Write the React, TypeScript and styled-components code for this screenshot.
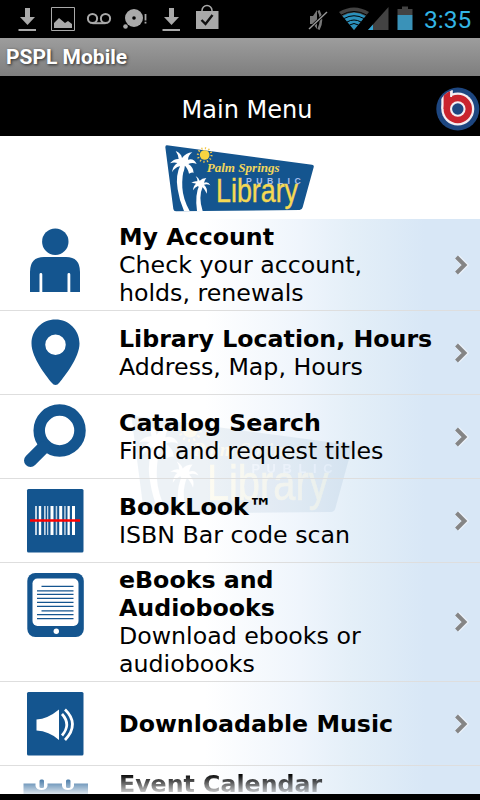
import type { ReactNode } from 'react'
import styled, { createGlobalStyle } from 'styled-components'

const BLUE = '#14558f'

const GlobalStyle = createGlobalStyle`
  * {
    box-sizing: border-box;
  }

  body {
    background-color: #000;
    margin: 0;
  }

  svg {
    display: block;
  }
`

const Screen = styled.div`
  background-color: #000;
  color: #000;
  display: flex;
  flex-direction: column;
  font-family: 'DejaVu Sans', sans-serif;
  height: 800px;
  overflow: hidden;
  width: 480px;
`

const StatusBar = styled.div`
  display: flex;
  height: 38px;
  justify-content: space-between;
`

const StatusIcons = styled.div`
  display: flex;
`

const Clock = styled.div`
  color: #33b5e5;
  font-family: Roboto, sans-serif;
  font-size: 24.5px;
  line-height: 38px;
  padding-top: 1px;
  width: 56px;
  white-space: nowrap;
`

const TitleBar = styled.div`
  background: linear-gradient(#9d9d9d, #7e7e7e);
  color: #fff;
  font-family: Roboto, sans-serif;
  font-size: 21px;
  font-weight: 700;
  height: 38px;
  line-height: 39px;
  padding-left: 6px;
  text-shadow: 1px 1px 3px rgb(0 0 0 / 70%);
`

const Header = styled.div`
  align-items: center;
  color: #fff;
  display: grid;
  font-size: 24px;
  grid-template-columns: 44px 1fr 44px;
  height: 60px;
  padding-top: 6px;
  text-align: center;
`

const HeaderTitle = styled.div`
  line-height: 28px;
  padding-left: 14px;
  padding-top: 2px;
`

const Banner = styled.div`
  background-color: #fff;
  display: flex;
  height: 83px;
  padding-left: 150px;
`

const List = styled.div`
  background: linear-gradient(
    90deg,
    #fff 0,
    #fff 205px,
    #eff5fc 300px,
    #e4eff8 350px,
    #d8e7f6 425px
  );
  height: 575px;
  isolation: isolate;
  overflow: hidden;
  position: relative;
`

const Watermark = styled.div`
  left: 109px;
  opacity: 0.07;
  position: absolute;
  top: 183px;
  z-index: -1;
`

const Row = styled.div<{ height: number }>`
  align-items: center;
  border-bottom: 1px solid #dedede;
  display: grid;
  grid-template-columns: 119px 1fr 40px;
  height: ${({ height }) => height}px;
`

const IconCell = styled.div`
  align-self: start;
`

const RowText = styled.div`
  font-size: 23.7px;
  line-height: 28px;
`

const RowTitle = styled.div`
  font-weight: 700;
`

const RowBody = styled(RowText)<{ $narrow?: boolean }>`
  margin-right: -20px;
  padding-right: ${({ $narrow }) => ($narrow ? '70px' : 0)};
`

const Chevron = styled.div`
  padding-left: 12px;
`

const FadingRow = styled.div`
  display: grid;
  grid-template-columns: 119px 1fr;
  height: 28px;
  mask-image: linear-gradient(#000 8px, rgb(0 0 0 / 15%) 28px);
  overflow: hidden;

  ${RowText} {
    padding-top: 4px;
  }
`

const NotificationIcons = () => (
  <svg width="230" height="38" viewBox="0 0 230 38" fill="#a9a9a9">
    <path d="M25 8h5v9h5l-7.500 8-7.500-8h5zM18.500 29H36v2H18.500z" />
    <path d="M51.500 7.500h23v23h-23z" fill="none" stroke="#a9a9a9" />
    <path d="M54 28v-5l5-5 6 5 3-2 4 3v4z" />
    <g fill="none" stroke="#a9a9a9" strokeWidth="2">
      <circle cx="92.500" cy="18.500" r="4.600" />
      <circle cx="105.500" cy="18.500" r="4.600" />
      <path d="M92.500 23.200h13" />
    </g>
    <circle cx="134" cy="18" r="9" />
    <circle cx="134" cy="18" r="1.800" fill="#000" />
    <circle cx="125.500" cy="26.500" r="2.300" />
    <path d="M144.600 14h1.800v6.500h-1.800zM144.600 21.800h1.800v1.800h-1.800z" />
    <path d="M169 8h5v9h5l-7.500 8-7.500-8h5zM162.500 29H180v2h-17.500z" />
    <path d="M202 12v-1.500a5 5 0 0 1 10 0V12" fill="none" stroke="#a9a9a9" strokeWidth="1.500" />
    <path d="M196 11h22.500v18H196z" />
    <path d="M201.500 20l4 4 7-9" fill="none" stroke="#111" strokeWidth="2.400" />
  </svg>
)

const SystemIcons = () => (
  <svg width="119" height="38" viewBox="305 0 119 38">
    <path d="M310 16h3l4-6v19l-4-5h-3z" fill="#777" />
    <path d="M318.500 10.500q5 9 0 19" fill="none" stroke="#777" strokeWidth="2.500" />
    <path d="M309 29l18-17" stroke="#000" strokeWidth="3" />
    <path d="M309 29l18-17" stroke="#999" strokeWidth="1.400" />
    <path d="M354 30L339 12q15-9 30 0z" fill="#434343" />
    <path d="M354 30L342.500 16q11.500-7 23 0z" fill="#2b91bd" />
    <g fill="none" stroke="#000" strokeWidth="1">
      <path d="M341.300 15q12.700-7 25.400 0" />
      <path d="M344 18.500q10-5.500 20 0" />
      <path d="M347 22q7-4 14 0" />
      <path d="M349.500 25q4.500-3 9 0" />
    </g>
    <path d="M388.500 7v23H368z" fill="#434343" />
    <path d="M373 24.500V30h-5z" fill="#33a6d6" />
    <path d="M402 6.500h6V9h4.500v6H397.500V9h4.500z" fill="#434343" />
    <path d="M397.500 15h15v15h-15z" fill="#3a92b8" />
  </svg>
)

const BadgeIcon = () => (
  <svg width="44" height="44" viewBox="0 0 44 44">
    <clipPath id="badge">
      <circle cx="21.800" cy="22" r="19.500" />
    </clipPath>
    <circle cx="21.800" cy="22" r="21.500" fill="#1d4680" />
    <g clipPath="url(#badge)">
      <circle cx="21.800" cy="22" r="16.500" fill="#f4eef2" />
      <path d="M5.300 22V5l4-4h7.500v12z" fill="#f4eef2" />
      <circle cx="21.800" cy="22" r="14.200" fill="#c9242e" />
      <path d="M7.600 22V4.500L14.300 0v22z" fill="#c9242e" />
      <circle cx="21.800" cy="22" r="7.800" fill="#f4eef2" />
      <path d="M15.200 1v9" stroke="#f4eef2" strokeWidth="1.800" />
      <circle cx="21.800" cy="22" r="5.700" fill="#1d4680" />
    </g>
  </svg>
)

const Logo = ({ width, height }: { width: number; height: number }) => (
  <svg width={width} height={height} viewBox="0 0 540 252">
    <path
      d="M51 28L486 86q7 1 5 8L458 214q-2 8-9 8L78 226q-7 0-8-7L46 34q0-7 5-6z"
      fill={BLUE}
    />
    <circle
      cx="164"
      cy="57"
      r="20.500"
      fill="none"
      stroke="#f3c84b"
      strokeWidth="6"
      strokeDasharray="3.800 6.930"
    />
    <circle cx="164" cy="57" r="14.500" fill="#f8d440" />
    <g fill="#fff">
      <path d="M93 84q-18 34-10 76 5 34 19 65h17q-20-36-22-70-2-36 8-68z" />
      <path d="M96 66Q94 52 77 45q8 11 9 24-14-1-26 13 11-4 22-1-14 9-16 28 8-14 23-18 8 7 11 17 5-8 3-20 10 8 14 25 13-6 14-1 0-18-16-28 12-6 25 0-8-18-26-13 1-14 13-22-20 2-31 17z" />
      <path d="M148 148q-14 28-7 77h17q-14-42 1-75z" />
      <path d="M149 134q-2-8-12-14 6 8 5 16-10-2-18 5 8-1 14 2-8 6-9 20 5-9 15-13 5 5 6 12 4-6 3-13 10 7 17 24 4-16-8-27 10-3 19 2-6-12-19-8 2-8 7-14-13 0-20 8z" />
    </g>
    <text
      x="170"
      y="109"
      fill="#f1d65b"
      fontFamily="'Liberation Serif', serif"
      fontSize="39"
      fontStyle="italic"
      fontWeight="700"
      textLength="219"
      lengthAdjust="spacingAndGlyphs"
    >
      Palm Springs
    </text>
    <text
      x="288"
      y="143"
      fill="#a9c0ee"
      fontFamily="'Liberation Sans', sans-serif"
      fontSize="26"
      fontWeight="700"
      textLength="164"
    >
      PUBLIC
    </text>
    <text
      x="198"
      y="198"
      fill="#f5d954"
      stroke="#f5d954"
      strokeWidth="1.200"
      fontFamily="'Liberation Sans', sans-serif"
      fontSize="101"
      textLength="246"
      lengthAdjust="spacingAndGlyphs"
    >
      Library
    </text>
  </svg>
)

const MenuIcon = ({ children }: { children: ReactNode }) => (
  <svg width="119" height="80" viewBox="0 0 119 80" fill={BLUE}>
    {children}
  </svg>
)

const PersonIcon = () => (
  <MenuIcon>
    <circle cx="55.300" cy="22.700" r="13.200" />
    <path d="M30 73V53q0-15 14-15h22q14 0 14 15v20H70.300V55.500a1.400 1.400 0 0 0-2.800 0V73H42.300V55.500a1.400 1.400 0 0 0-2.800 0V73z" />
  </MenuIcon>
)

const PinIcon = () => (
  <MenuIcon>
    <path
      fillRule="evenodd"
      d="M55.500 8.500c13.500 0 24 10.500 24 24 0 14-15 33-20 39q-4 5-8 0c-5-6-20-25-20-39 0-13.500 10.500-24 24-24zm0 15a10 10 0 1 0 0 20.500 10 10 0 0 0 0-20.500z"
    />
  </MenuIcon>
)

const SearchIcon = () => (
  <MenuIcon>
    <circle cx="59.600" cy="35.500" r="20.400" fill="none" stroke={BLUE} strokeWidth="11.500" />
    <path d="M43 53L30.500 65.500" stroke={BLUE} strokeWidth="13" strokeLinecap="round" />
  </MenuIcon>
)

const BARS = [
  [35, 2],
  [38.8, 2.4],
  [44, 1.7],
  [47, 1.3],
  [50.5, 3],
  [55.7, 1.5],
  [59.2, 3],
  [64.2, 1.5],
  [67.5, 2.3],
  [72, 3],
]

const BarcodeIcon = () => (
  <MenuIcon>
    <rect x="27" y="10" width="56.500" height="63.500" rx="1.500" />
    {BARS.map(([x, width]) => (
      <rect key={x} x={x} y="27" width={width} height="29" fill="#fff" fillOpacity={width > 2 ? 1 : 0.75} />
    ))}
    <path d="M30 41.500h50" stroke="#f00" strokeWidth="2.600" />
  </MenuIcon>
)

const TabletIcon = () => (
  <MenuIcon>
    <rect x="27.300" y="10" width="56.500" height="64" rx="8" />
    <rect x="32.500" y="15.500" width="46" height="47.500" rx="5" fill="#fff" />
    <path
      d="M41.500 23.300h32M37 27.800h36.500M37 31.300h36.500M37 35.300h36.500M37 39.300h36.500M37 43.300h36.500M41.500 47.800h32M37 51.700h36.500M37 55.700h36.500"
      stroke={BLUE}
      strokeWidth="1.300"
    />
    <circle cx="56.300" cy="68.300" r="2.700" fill="#fff" />
  </MenuIcon>
)

const SpeakerIcon = () => (
  <MenuIcon>
    <rect x="27" y="10" width="56.500" height="63.500" rx="1.500" />
    <path d="M36.500 37.500q11-.5 22.500-10v30.500q-10-9-22.500-9.500z" fill="#fff" />
    <g fill="none" stroke="#fff" strokeWidth="2.700">
      <path d="M62 32q9.500 10.500 0 21.500" />
      <path d="M65 27.500q15 14.500 0 30.500" />
    </g>
  </MenuIcon>
)

const CalendarIcon = () => (
  <MenuIcon>
    <path d="M23.500 17.500h12V20q1 4 6 4t6-4v-2.500H62V20q1 4 6 4t6-4v-2.500h14V80H23.500z" />
    <rect x="39.500" y="13.500" width="4.500" height="8.500" rx="1.500" />
    <rect x="66" y="13.500" width="4.500" height="8.500" rx="1.500" />
  </MenuIcon>
)

const ITEMS = [
  { title: 'My Account', detail: 'Check your account, holds, renewals', icon: PersonIcon, height: 92 },
  { title: 'Library Location, Hours', detail: 'Address, Map, Hours', icon: PinIcon, height: 84 },
  { title: 'Catalog Search', detail: 'Find and request titles', icon: SearchIcon, height: 84 },
  { title: 'BookLook™', detail: 'ISBN Bar code scan', icon: BarcodeIcon, height: 84 },
  {
    title: 'eBooks and Audiobooks',
    detail: 'Download ebooks or audiobooks',
    icon: TabletIcon,
    height: 119,
  },
  { title: 'Downloadable Music', icon: SpeakerIcon, height: 84 },
]

const App = () => (
  <>
    <GlobalStyle />
    <Screen>
      <StatusBar>
        <NotificationIcons />
        <StatusIcons>
          <SystemIcons />
          <Clock>3:35</Clock>
        </StatusIcons>
      </StatusBar>
      <TitleBar>PSPL Mobile</TitleBar>
      <Header>
        <span />
        <HeaderTitle>Main Menu</HeaderTitle>
        <BadgeIcon />
      </Header>
      <Banner>
        <Logo width={180} height={84} />
      </Banner>
      <List>
        <Watermark>
          <Logo width={267} height={125} />
        </Watermark>
        {ITEMS.map(({ title, detail, icon: Icon, height }) => (
          <Row key={title} height={height}>
            <IconCell>
              <Icon />
            </IconCell>
            <RowBody $narrow={height > 84}>
              <RowTitle>{title}</RowTitle>
              {detail}
            </RowBody>
            <Chevron>
              <svg width="20" height="22" viewBox="0 0 20 22">
                <path d="M5 3l8 8-8 8" fill="none" stroke="#fff" strokeOpacity="0.5" strokeWidth="6" />
                <path d="M4.500 3l8 8-8 8" fill="none" stroke="#858585" strokeWidth="4" />
              </svg>
            </Chevron>
          </Row>
        ))}
        <FadingRow>
          <CalendarIcon />
          <RowText>
            <RowTitle>Event Calendar</RowTitle>
          </RowText>
        </FadingRow>
      </List>
    </Screen>
  </>
)

export default App
